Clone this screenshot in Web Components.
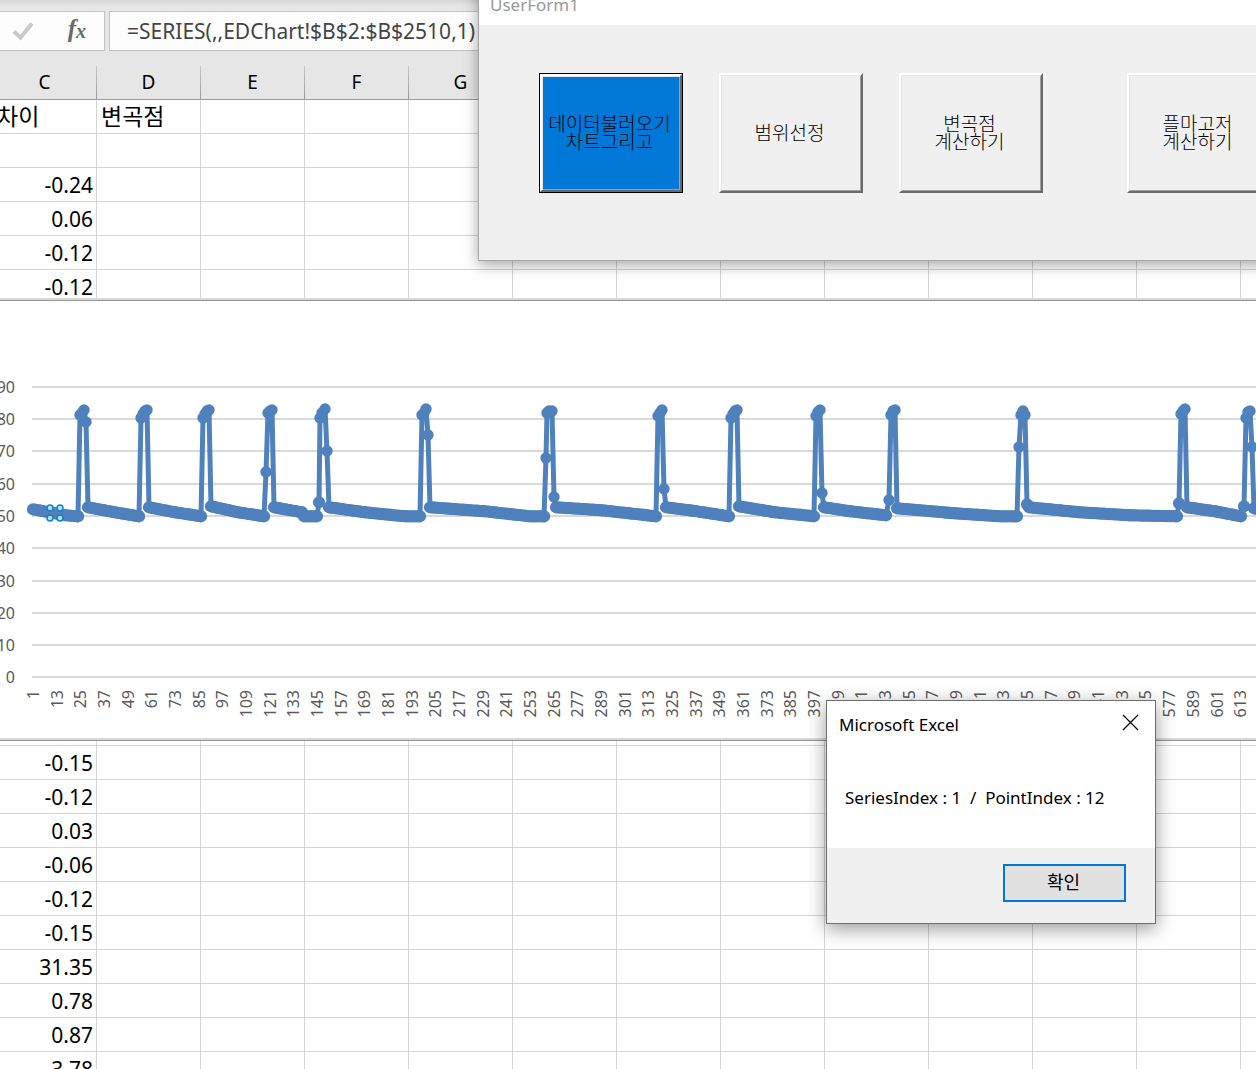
<!DOCTYPE html>
<html lang="ko">
<head>
<meta charset="utf-8">
<title>Excel</title>
<style>
  html, body { margin: 0; height: 100%; overflow: hidden; background: #fff; }
  body { font-family: "Noto Sans", "Noto Sans CJK KR", sans-serif; color: #000; }
</style>
</head>
<body>
<excel-window>
  <formula-bar slot="bar" formula="=SERIES(,,EDChart!$B$2:$B$2510,1)"></formula-bar>
  <sheet-grid slot="sheet">
    <line-chart></line-chart>
  </sheet-grid>
  <user-form slot="windows" caption="UserForm1">
    <form-button active>데이터불러오기<br>차트그리고</form-button>
    <form-button>범위선정</form-button>
    <form-button>변곡점<br>계산하기</form-button>
    <form-button apart>플마고저<br>계산하기</form-button>
  </user-form>
  <message-box slot="windows" caption="Microsoft Excel" confirm="확인">SeriesIndex : 1  /  PointIndex : 12</message-box>
</excel-window>

<script>
class ExcelWindow extends HTMLElement {
  constructor() {
    super();
    this.attachShadow({ mode: 'open' }).innerHTML = `
      <style>
        :host { display: flex; flex-direction: column; position: relative; height: 100vh; overflow: hidden; background: #e6e6e6; }
        main { flex: 1; min-height: 0; overflow: hidden; }
      </style>
      <slot name="bar"></slot>
      <main><slot name="sheet"></slot></main>
      <slot name="windows"></slot>`;
  }
}

class FormulaBar extends HTMLElement {
  connectedCallback() {
    this.attachShadow({ mode: 'open' }).innerHTML = `
      <style>
        :host { display: flex; gap: 4px; padding: 11px 0 15px; background: linear-gradient(#d6d6d6, #e6e6e6 6px); }
        .tools { display: flex; align-items: center; justify-content: space-between; box-sizing: border-box; width: 105px; height: 40px;
                 padding: 0 18px 0 12px; background: #fdfdfd; border: 1px solid #c3c3c3; border-left: 0; }
        button { display: flex; padding: 0; border: 0; background: none; color: #6a6a6a; font: italic bold 25px/28px "Liberation Serif", serif; }
        small { font-size: 20px; line-height: 32px; }
        input { flex: 1; min-width: 0; box-sizing: border-box; height: 40px; padding: 0 17px; border: 1px solid #c3c3c3; border-right: 0;
                border-radius: 0; outline: 0; background: #fdfdfd; color: #444; font: 21px/38px "Noto Sans", sans-serif; }
      </style>
      <div class="tools">
        <button aria-label="입력"><svg width="22" height="20" viewBox="0 0 22 20"><path d="M2 10.500L8.500 16.500L20 2.500" fill="none" stroke="#c9c9c9" stroke-width="4"/></svg></button>
        <button aria-label="함수 삽입">f<small>x</small></button>
      </div>
      <input aria-label="수식 입력줄">`;
    this.shadowRoot.querySelector('input').value = this.getAttribute('formula');
  }
}

class SheetGrid extends HTMLElement {
  connectedCallback() {
    const columns = 'CDEFGHIJKLMNO'.split('');
    const values = { 3: '-0.24', 4: '0.06', 5: '-0.12', 6: '-0.12', 20: '-0.15', 21: '-0.12', 22: '0.03', 23: '-0.06',
                     24: '-0.12', 25: '-0.15', 26: '31.35', 27: '0.78', 28: '0.87', 29: '3.78' };
    let rows = '<tr><td class="text">차이</td><td class="text">변곡점</td>' + '<td></td>'.repeat(columns.length - 2) + '</tr>';
    for (let r = 2; r <= 32; r++) rows += `<tr><td>${values[r] || ''}</td>${'<td></td>'.repeat(columns.length - 1)}</tr>`;
    this.attachShadow({ mode: 'open' }).innerHTML = `
      <style>
        :host { display: block; position: relative; }
        table { table-layout: fixed; width: 1352px; margin-left: -7px; border-spacing: 0; }
        th, td { box-sizing: border-box; height: 34px; padding: 0 3px; line-height: 32px; white-space: nowrap; }
        th { padding: 0 0 2px; font-size: 19px; line-height: 30px; font-weight: 400; background: #e6e6e6; border-bottom: 1px solid #9b9b9b; border-right: 1px solid;
             border-image: linear-gradient(#c8c8c8, #9b9b9b) 1; }
        td { font-size: 21px; text-align: right; background: #fff; border: solid #d4d4d4; border-width: 0 1px 1px 0; }
        .text { padding: 0 4px 2px; text-align: left; font-size: 23px; line-height: 30px; }
        ::slotted(line-chart) { position: absolute; left: 0; right: 0; top: 232px; }
      </style>
      <table><thead><tr>${columns.map(c => `<th>${c}</th>`).join('')}</tr></thead><tbody>${rows}</tbody></table>
      <slot></slot>`;
  }
}

class LineChart extends HTMLElement {
  connectedCallback() {
    // Canvas origin is the top left of the plot area; 0 sits at y = 376, each 10 units is 32.3 high.
    const top = 301;
    const zero = 677.4 - top;
    let grid = '', labels = '';
    for (let v = 0; v <= 90; v += 10) {
      const y = Math.round(zero - v * 3.23);
      grid += `<path d="M32 ${y}H1400"/>`;
      labels += `<text x="15" y="${y + 6}" text-anchor="end">${v}</text>`;
    }
    for (let i = 0; i < 56; i++) {
      const x = Math.round(39 + i * 23.67);
      labels += `<text transform="translate(${x} ${690 - top}) rotate(-90)" text-anchor="end">${1 + i * 12}</text>`;
    }
    // Each run: a slow decay through knots, then the points of the peak that follows it.
    const runs = [
      [[[33, 509], [66, 515], [78, 516]], [[80, 415], [82, 413], [84, 410], [86, 422]]],
      [[[88, 507], [115, 512], [139, 516]], [[141, 418], [143, 414], [145, 411], [147, 410]]],
      [[[149, 507], [175, 512], [201, 516]], [[203, 418], [205, 414], [207, 411], [209, 410]]],
      [[[211, 506], [238, 512], [264, 516]], [[266, 472], [268, 413], [270, 411], [272, 410]]],
      [[[274, 507], [302, 512]], []],
      [[[304, 516], [317, 516]], [[319, 502], [320, 418], [322, 413], [325, 409], [327, 451]]],
      [[[329, 507], [365, 512], [405, 516], [420, 516]], [[422, 415], [424, 413], [426, 409], [428, 435]]],
      [[[430, 507], [485, 511], [530, 516], [544, 516]], [[546, 458], [547, 413], [549, 411], [552, 411], [554, 497]]],
      [[[556, 507], [602, 510], [656, 516]], [[658, 416], [660, 413], [662, 410], [664, 489]]],
      [[[666, 507], [690, 510], [729, 516]], [[731, 418], [733, 414], [735, 411], [737, 410]]],
      [[[739, 506], [775, 512], [814, 516]], [[816, 416], [818, 412], [820, 410], [822, 493]]],
      [[[824, 507], [850, 511], [886, 515]], [[889, 500], [891, 415], [893, 411], [895, 410]]],
      [[[897, 508], [955, 513], [1000, 516], [1017, 516]], [[1019, 447], [1021, 415], [1023, 411], [1025, 415], [1027, 504]]],
      [[[1029, 507], [1080, 512], [1130, 515], [1177, 516]], [[1179, 503], [1181, 414], [1183, 411], [1185, 409]]],
      [[[1187, 507], [1215, 511], [1241, 516]], [[1244, 506], [1246, 418], [1248, 412], [1250, 411], [1252, 447]]],
      [[[1254, 508], [1300, 515]], []]
    ];
    const points = [];
    for (const [knots, peak] of runs) {
      for (let k = 1; k < knots.length; k++) {
        const [ax, ay] = knots[k - 1], [bx, by] = knots[k];
        for (let x = ax; x <= bx; x += 1.972) points.push([x, ay + (by - ay) * (x - ax) / (bx - ax)]);
      }
      points.push(knots[knots.length - 1], ...peak);
    }
    const pts = points.map(([x, y]) => [x.toFixed(1), (y - top + (y > 500 ? .3 : 0)).toFixed(1)]);
    this.attachShadow({ mode: 'open' }).innerHTML = `
      <style>
        :host { display: block; overflow: hidden; background: #fff; border-top: 2px solid #d9d9d9; border-bottom: 1px solid #969696; }
        figure { margin: 0; border-top: 1px solid #969696; border-bottom: 2px solid #d9d9d9; }
        svg { display: block; width: 1400px; height: 437px; }
        text { font-size: 16px; fill: #595959; }
      </style>
      <figure><svg role="img" aria-label="EDChart">
        <g stroke="#d9d9d9" stroke-width="2">${grid}</g>
        ${labels}
        <polyline points="${pts.join(' ')}" fill="none" stroke="#4f81bd" stroke-width="5" stroke-linejoin="round"/>
        <g fill="#4f81bd">${pts.map(([x, y]) => `<circle cx="${x}" cy="${y}" r="${y > 200 ? 6.1 : 5.7}"/>`).join('')}</g>
        <rect x="50" y="207" width="10" height="10" fill="#6f7f8e"/>
        <rect x="52" y="209" width="6" height="6" fill="#4f81bd"/>
        <g fill="#b5defa" stroke="#0c80d8" stroke-width="1.500"><circle cx="50" cy="207" r="3"/><circle cx="60" cy="207" r="3"/><circle cx="50" cy="217" r="3"/><circle cx="60" cy="217" r="3"/></g>
      </svg></figure>`;
  }
}

class UserForm extends HTMLElement {
  connectedCallback() {
    this.attachShadow({ mode: 'open' }).innerHTML = `
      <style>
        :host { display: block; position: absolute; left: 478px; top: -20px; width: 900px; border: 1px solid #a5a5a5; background: #f0f0f0;
                box-shadow: 0 4px 14px rgba(0, 0, 0, .35); }
        header { height: 44px; padding: 0 11px; background: #fff; color: #999; font-size: 17px; line-height: 48px; }
        section { display: flex; gap: 36px; padding: 48px 60px 67px; }
      </style>
      <header>${this.getAttribute('caption')}</header>
      <section><slot></slot></section>`;
  }
}

class FormButton extends HTMLElement {
  constructor() {
    super();
    this.attachShadow({ mode: 'open' }).innerHTML = `
      <style>
        :host { display: block; flex: none; width: 144px; height: 120px; }
        :host([apart]) { margin-left: 48px; }
        button { display: block; box-sizing: border-box; width: 100%; height: 100%; padding: 0 3px 2px 0; border: 2px solid; border-color: #fff #696969 #696969 #fff;
                 background: #f0f0f0; box-shadow: inset 1px 1px #e3e3e3, inset -1px -1px #a0a0a0; color: #000;
                 font: 300 19px/18px "Noto Sans CJK KR", sans-serif; white-space: nowrap; }
        :host([active]) { box-sizing: border-box; border: 1px solid #000; }
        :host([active]) button { background: #0078d7; }
      </style>
      <button><slot></slot></button>`;
  }
}

class MessageBox extends HTMLElement {
  connectedCallback() {
    this.attachShadow({ mode: 'open' }).innerHTML = `
      <style>
        :host { display: block; position: absolute; left: 826px; top: 700px; box-sizing: border-box; width: 330px; border: 1px solid #6e6e6e;
                background: #fff; box-shadow: 0 5px 18px rgba(0, 0, 0, .4); }
        header { display: flex; align-items: center; justify-content: space-between; height: 46px; padding: 0 16px 0 12px; font-size: 17px; }
        button { font: inherit; }
        .close { display: flex; padding: 0; border: 0; background: none; }
        p { margin: 0; padding: 0 18px; font-size: 17px; line-height: 101px; white-space: pre; }
        footer { display: flex; justify-content: flex-end; padding: 16px 29px 21px; background: #f0f0f0; }
        footer button { width: 123px; height: 38px; padding: 0 2px 2px 0; border: 2px solid #0078d7; background: #e1e1e1; color: #000;
                        font-size: 18px; line-height: 24px; }
      </style>
      <header>${this.getAttribute('caption')}<button class="close" aria-label="닫기"><svg width="17" height="20" viewBox="0 0 17 20"><path d="M1 1L16 16M16 1L1 16" stroke="#000" stroke-width="1.200"/></svg></button></header>
      <p><slot></slot></p>
      <footer><button>${this.getAttribute('confirm')}</button></footer>`;
  }
}

customElements.define('excel-window', ExcelWindow);
customElements.define('formula-bar', FormulaBar);
customElements.define('sheet-grid', SheetGrid);
customElements.define('line-chart', LineChart);
customElements.define('user-form', UserForm);
customElements.define('form-button', FormButton);
customElements.define('message-box', MessageBox);
</script>
</body>
</html>
